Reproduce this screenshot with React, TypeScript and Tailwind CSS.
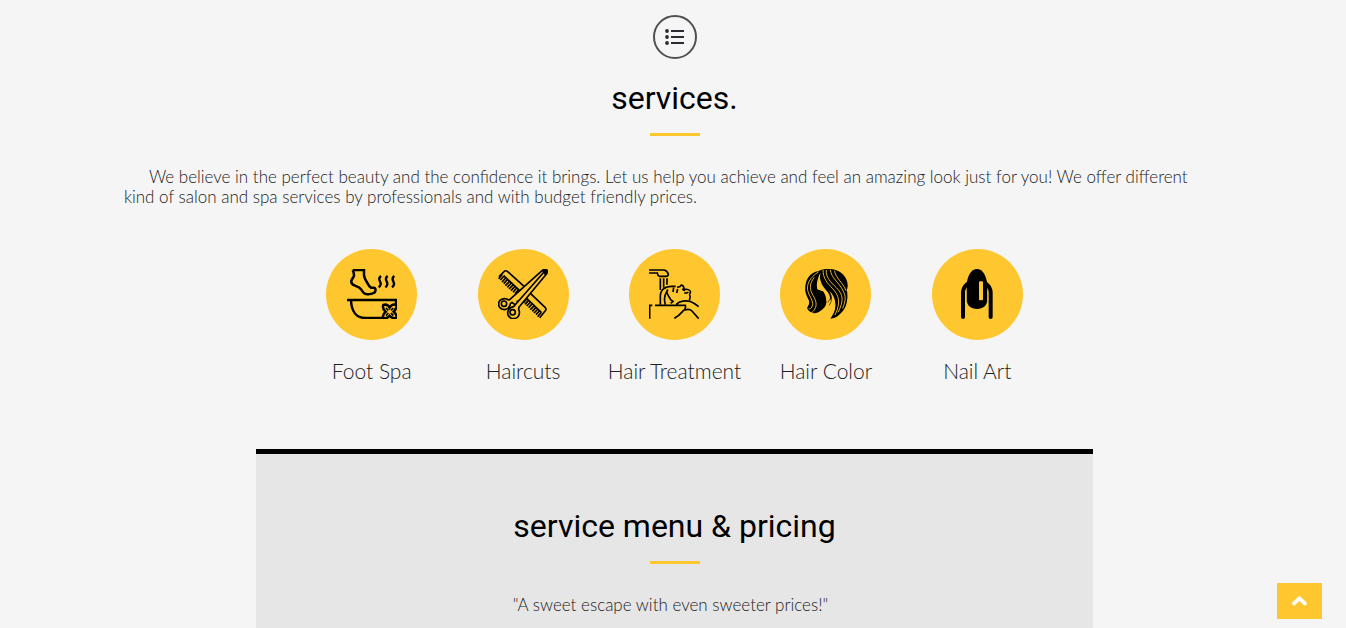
import type { ReactNode } from "react";

const FootSpaIcon = () => (
  <svg viewBox="81 87 150 150" className="size-[50px]" fill="none" stroke="#000" strokeWidth="7.5" aria-hidden="true">
    <path d="M98 90H132V104C132 113 136 119 141 127C144 133 148 140 153 143H161C168 144 169 155 161 159C154 163 145 163 137 162C130 161 128 155 124 149C119 141 111 139 105 137C99 135 93 130 94 123C95 117 101 112 102 107C102 101 101 96 98 90" />
    <path strokeWidth="7" d="M183 108C175 114 177 119 180 124C183 129 183 136 176 142M203 108C195 114 197 119 200 124C203 129 203 136 196 142M223 108C215 114 217 119 220 124C223 129 223 136 216 142" />
    <path d="M81 180H231M93 181C94 212 108 234 136 234H188M228 181V192" />
    <path d="M190 195C198 192 205 196 209 203C213 196 221 192 229 195C231 203 226 210 221 215C227 220 231 226 229 234C221 236 213 232 209 227C205 232 198 236 190 234C187 226 191 220 197 215C191 210 187 203 190 195Z" />
    <path d="M198 204L205 211M220 204L213 211M198 227L205 219M220 227L213 219" strokeWidth="5" />
  </svg>
);

const HaircutsIcon = () => (
  <svg viewBox="81 87 150 150" className="size-[50px]" fill="none" stroke="#000" strokeWidth="5" strokeLinejoin="round" aria-hidden="true">
    <path d="M98 107L158 163M84 110L101 93Q105 91 109 94L160 140M175 157L223 203Q227 208 223 212L206 233M166 174L211 217" />
    <path d="M94 103L83 116M99 108L88 120M105 113L93 126M110 118L98 131M116 124L103 137M121 129L109 142M127 134L114 147M132 139L120 152M137 144L126 157M143 149L132 161M168 176L157 188M173 181L162 193M179 186L167 198M184 191L173 203M190 197L178 209M195 202L184 214M201 207L189 219M206 212L195 224M211 217L200 230" />
    <path d="M116 179L214 91Q220 87 226 89Q232 92 227 101L145 200Q141 206 145 214Q147 224 139 232Q129 239 119 234Q110 228 110 218Q111 207 121 202Q131 201 132 194L123 187Q117 189 117 196Q113 207 102 209Q91 209 85 201Q80 190 87 181Q97 173 107 177Q112 181 116 179Z" fill="#ffc72f" />
    <circle cx="99" cy="191" r="8" />
    <circle cx="125" cy="217" r="8" />
    <path d="M132 195L219 96M139 184L137 182" />
    <path d="M213 93L217 90Q223 87 228 90Q231 94 227 101L222 106Z" fill="#000" stroke="none" />
  </svg>
);

const HairTreatmentIcon = () => (
  <svg viewBox="81 87 150 150" className="size-[50px]" fill="none" stroke="#000" strokeWidth="5" aria-hidden="true">
    <path d="M81 90H126Q136 92 139 103Q139 109 132 109H112Q107 107 106 99H81" />
    <path d="M115 115V150M125 115V143M135 115V134" />
    <path d="M115 194V169C115 150 129 139 149 139H161M155 143L153 156M167 147L164 159M165 141C171 142 176 139 178 135C184 136 186 140 186 147C195 147 202 149 205 154C207 158 202 160 203 165C207 169 204 174 202 181M181 146Q184 152 190 151M187 158Q193 162 199 156" />
    <path d="M130 194C125 179 128 166 134 155C136 165 141 170 146 179L153 184L146 190M136 160C132 154 136 151 138 149" />
    <path d="M83 236V196H91M99 196H190Q193 206 184 212C177 220 170 229 157 235M163 193C173 182 192 181 204 184C213 188 221 193 230 200M187 211C195 207 204 207 210 213L230 236" />
  </svg>
);

const HairColorIcon = () => (
  <svg viewBox="81 87 150 150" className="size-[50px]" fill="none" stroke="#ffc72f" strokeWidth="2.6" aria-hidden="true">
    <path fill="#000" stroke="none" d="M156 87C145 87 139 91 132 94C112 97 99 112 95 132C92 148 94 160 101 174C108 187 107 191 99 204C103 213 110 218 118 218C119 222 133 219 142 211C151 204 158 197 157 183C157 172 153 162 147 154C142 151 137 151 131 148C128 140 132 131 137 112C140 125 144 138 155 149C164 157 169 167 169 181C176 173 170 160 164 151C179 164 186 181 184 199C183 215 177 225 169 236C191 235 206 216 214 201C221 187 222 161 218 149C225 139 220 113 203 100C194 90 171 85 156 87Z" />
    <path d="M133 96C107 113 98 132 101 151C104 167 115 176 116 190C116 202 109 209 104 206M121 112C103 133 109 153 117 166C126 181 130 194 122 208C119 214 117 214 115 215" />
    <path d="M147 89C147 116 160 129 175 145C195 165 201 188 183 225M157 90C154 112 172 128 187 143C207 163 211 181 192 217M169 89C172 115 194 126 206 150C217 170 215 181 206 205M182 92C184 114 206 126 216 152" />
    <path fill="#ffc72f" stroke="none" d="M139 98C129 118 126 138 131 148C137 152 143 151 148 154C143 146 136 150 134 141C133 133 137 124 138 112Z" />
    <path stroke="#000" strokeWidth="2" d="M163 150C175 168 176 181 165 196M160 187C168 181 171 174 169 166" />
  </svg>
);

const NailArtIcon = () => (
  <svg viewBox="81 87 150 150" className="size-[50px]" fill="none" aria-hidden="true">
    <path d="M114 231V158Q114 143 127 132M197 231V158Q197 143 184 132" stroke="#000" strokeWidth="12" strokeLinecap="round" />
    <path fill="#000" d="M156 87C138 87 127 109 125 132V178C125 198 138 207 156 207C174 207 187 198 187 178V132C184 109 174 87 156 87Z" />
    <rect x="162" y="124" width="12" height="57" rx="3" fill="#ffc72f" />
    <path d="M123 150V181M188 150V181" stroke="#ffc72f" strokeWidth="2" />
  </svg>
);

const services: { name: string; icon: ReactNode }[] = [
  { name: "Foot Spa", icon: <FootSpaIcon /> },
  { name: "Haircuts", icon: <HaircutsIcon /> },
  { name: "Hair Treatment", icon: <HairTreatmentIcon /> },
  { name: "Hair Color", icon: <HairColorIcon /> },
  { name: "Nail Art", icon: <NailArtIcon /> },
];

function SectionHeading({ children }: { children: ReactNode }) {
  return (
    <div className="flex flex-col items-center">
      <h2 className="text-center font-['Roboto',sans-serif] text-[32px] leading-10 font-normal text-black">{children}</h2>
      <div className="mt-[15px] h-[3px] w-[50px] bg-[#ffc72f]" />
    </div>
  );
}

export default function App() {
  return (
    <div className="min-h-screen bg-[#f5f5f5] font-['Lato',sans-serif] font-light text-[#222]">
      <main className="flex flex-col items-center pt-[15px] pl-[3px]">
        <div className="mb-[19px] flex size-11 items-center justify-center rounded-full border-2 border-[#505050]">
          <svg viewBox="0 0 20 16" className="h-4 w-5" fill="#2d2930" aria-hidden="true">
            <circle cx="2" cy="2" r="1.9" />
            <circle cx="2" cy="8" r="1.9" />
            <circle cx="2" cy="14" r="1.9" />
            <path d="M6 1h13v2H6zM6 7h13v2H6zM6 13h13v2H6z" />
          </svg>
        </div>
        <SectionHeading>services.</SectionHeading>
        <p className="mt-[31px] w-[82%] pr-2 indent-[25px] text-[17px] leading-5">
          We believe in the perfect beauty and the confidence it brings. Let us help you achieve and feel an amazing look
          just for you! We offer different kind of salon and spa services by professionals and with budget friendly prices.
        </p>
        <ul className="mt-[42px] grid w-[757px] max-w-full grid-cols-5">
          {services.map(({ name, icon }) => (
            <li key={name} className="flex flex-col items-center">
              <div className="flex size-[91px] justify-center rounded-full bg-[#ffc72f] pt-5">{icon}</div>
              <h3 className="mt-[17px] text-[21px] leading-7 whitespace-nowrap">{name}</h3>
            </li>
          ))}
        </ul>
        <section className="mt-16 flex w-[837px] max-w-full flex-col items-center border-t-5 border-black bg-[#e6e6e6] pt-[52px]">
          <SectionHeading>service menu &amp; pricing</SectionHeading>
          <p className="mt-[31px] pr-2 pb-[13px] text-[17px] leading-5">"A sweet escape with even sweeter prices!"</p>
        </section>
      </main>
      <a
        href="#"
        aria-label="Back to top"
        className="fixed right-6 bottom-[9px] flex h-9 w-[45px] items-center justify-center bg-[#ffc72f]"
      >
        <svg viewBox="0 0 16 12" className="h-3 w-4" fill="none" stroke="#fff" strokeWidth="3.8" strokeLinecap="round" aria-hidden="true">
          <path d="M2 8.4L7.4 3.4L12.8 8.4" />
        </svg>
      </a>
    </div>
  );
}
